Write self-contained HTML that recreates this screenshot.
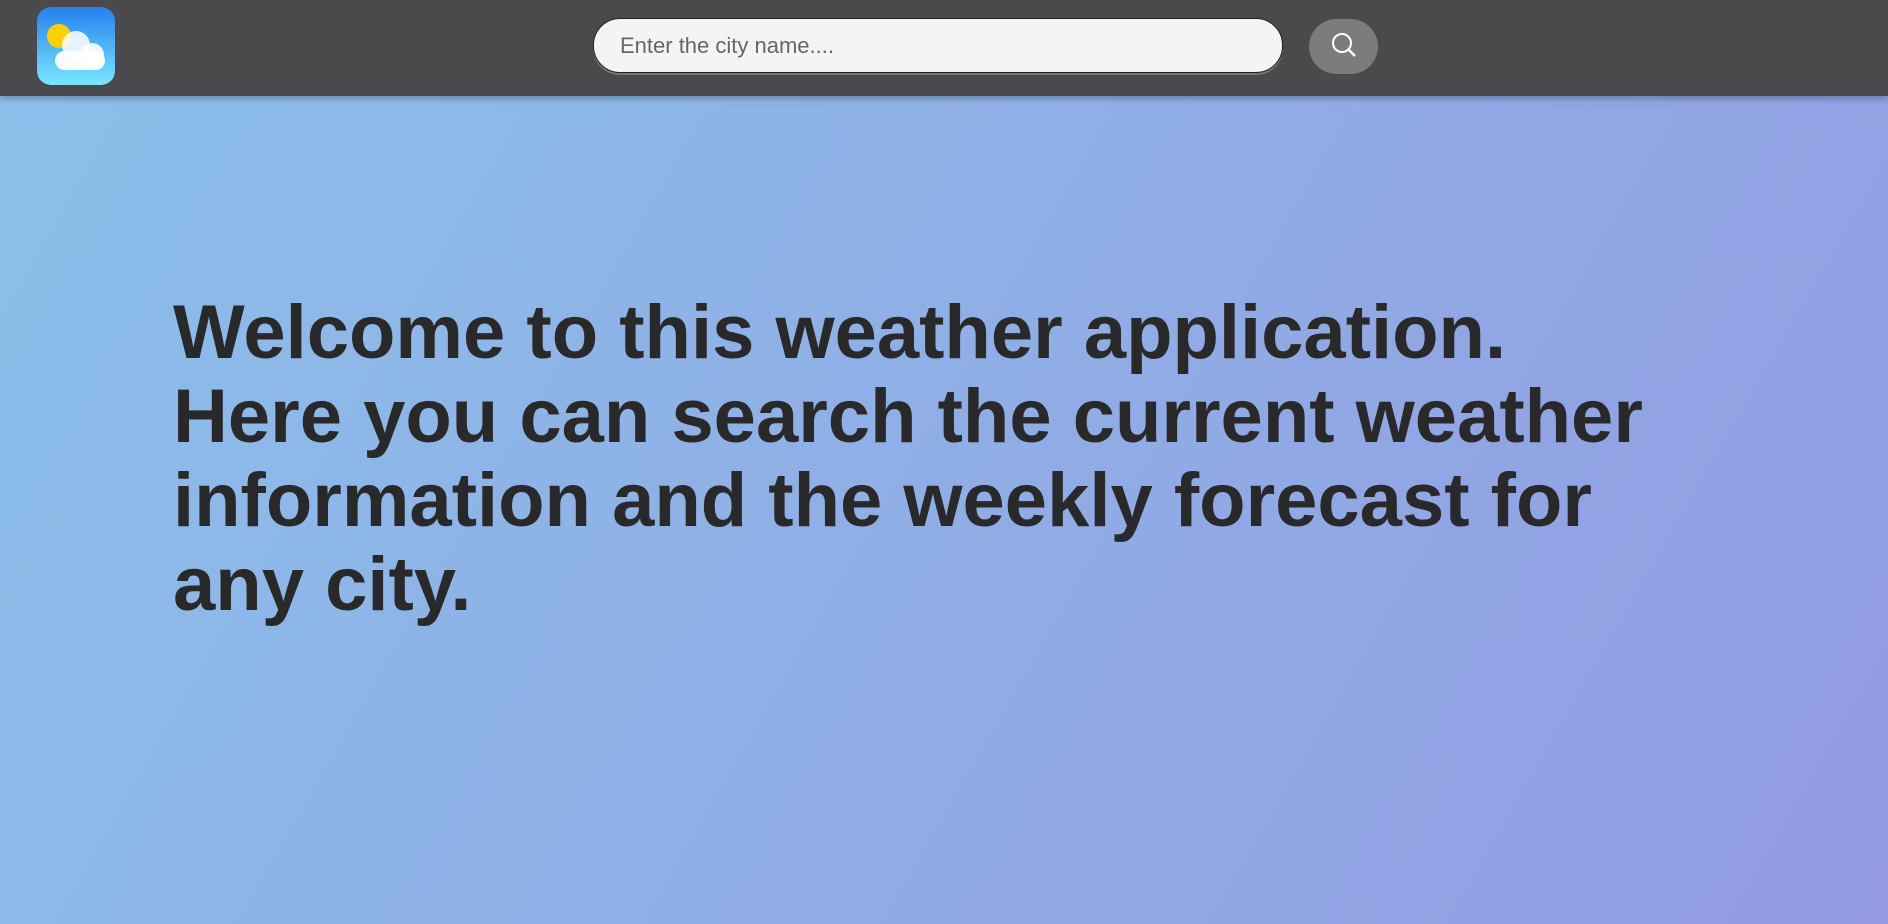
<!DOCTYPE html>
<html><head><style>
html,body{margin:0;padding:0;width:1888px;height:924px;overflow:hidden}
body{background:linear-gradient(120deg,#8bc0ea 0%,#8fb0e6 45%,#939ae2 100%);font-family:"Liberation Sans",sans-serif}
.hdr{position:absolute;left:0;top:0;width:1888px;height:96px;background:#4a4a4c;box-shadow:0 3px 6px rgba(0,0,0,.25)}
.logo{position:absolute;left:37px;top:7px;width:78px;height:78px;border-radius:14px;background:linear-gradient(#2580ee,#7be6ff);overflow:hidden}
.inp{position:absolute;left:593px;top:18px;width:690px;height:55px;border-radius:27px;background:#f4f4f4;border:1px solid #222;box-shadow:0 2px 0 #777;box-sizing:border-box;font-size:22px;color:#666;padding-left:26px;line-height:53px}
.btn{position:absolute;left:1309px;top:19px;width:69px;height:55px;border-radius:28px;background:#7c7c7c}
h1{position:absolute;left:173px;top:291px;margin:0;font-size:76px;line-height:84px;font-weight:bold;color:#292929;white-space:nowrap;letter-spacing:0}
</style></head><body>
<div class="hdr">
<div class="logo"><svg width="78" height="78" viewBox="0 0 78 78">
<circle cx="22" cy="29" r="12" fill="#ffd000"/>
<circle cx="39" cy="38" r="14" fill="#fff" opacity=".85"/>
<circle cx="55" cy="48" r="12" fill="#fff" opacity=".9"/>
<rect x="18" y="44" width="50" height="19" rx="9.5" fill="#fff" opacity=".95"/>
</svg></div>
<div class="inp">Enter the city name....</div>
<div class="btn"><svg width="69" height="55" viewBox="0 0 69 55"><circle cx="33" cy="24" r="9" fill="none" stroke="#fff" stroke-width="2"/><line x1="39.5" y1="30.5" x2="46" y2="37" stroke="#fff" stroke-width="2.5"/></svg></div>
</div>
<h1>Welcome to this weather application.<br>Here you can search the current weather<br>information and the weekly forecast for<br>any city.</h1>
</body></html>
